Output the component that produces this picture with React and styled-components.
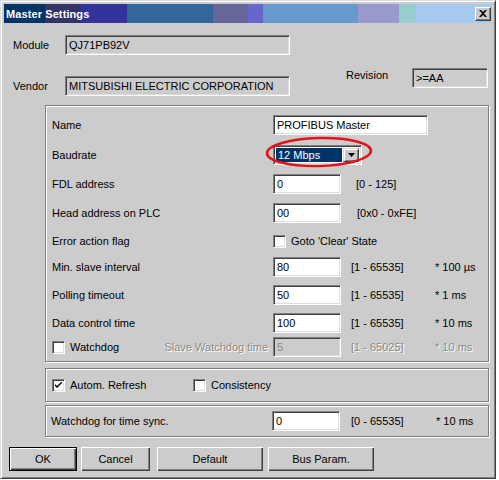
import React from 'react';
import styled, { createGlobalStyle } from 'styled-components';

const GlobalStyle = createGlobalStyle`
  * {
    margin: 0;
    padding: 0;
    box-sizing: border-box;
  }
  body {
    background: #ffffff;
    font-family: 'Liberation Sans', Arial, sans-serif;
    font-size: 11px;
    color: #000;
  }
`;

const face = '#cccccc';

const Window = styled.div`
  width: 496px;
  height: 479px;
  background: ${face};
  border-top: 1px solid #dcdcdc;
  border-left: 1px solid #dcdcdc;
  border-right: 1px solid #404040;
  border-bottom: 1px solid #404040;
  box-shadow: inset 1px 1px #ffffff, inset -1px -1px #808080;
  padding: 3px;
  display: flex;
  flex-direction: column;
`;

const TitleBar = styled.div`
  height: 19px;
  display: flex;
  align-items: center;
  justify-content: space-between;
  padding: 0 1px 0 2px;
  background: linear-gradient(
    to right,
    #003366 0 41px,
    #333366 41px 76px,
    #333399 76px 123px,
    #336699 123px 209px,
    #666699 209px 244px,
    #6666cc 244px 259px,
    #6699cc 259px 354px,
    #9999cc 354px 395px,
    #99cccc 395px 412px,
    #a6caf0 412px
  );
`;

const Title = styled.span`
  color: #fff;
  font-weight: bold;
  font-size: 11px;
  letter-spacing: 0.1px;
`;

const CloseButton = styled.div`
  width: 16px;
  height: 14px;
  background: ${face};
  border-top: 1px solid #fff;
  border-left: 1px solid #fff;
  border-right: 1px solid #404040;
  border-bottom: 1px solid #404040;
  box-shadow: inset -1px -1px #808080;
  display: flex;
  align-items: center;
  justify-content: center;
`;

const Body = styled.div`
  flex: 1;
  display: flex;
  flex-direction: column;
  padding: 12px 0 0 5px;
`;

const TopRow = styled.div`
  display: flex;
  align-items: flex-start;
  margin-top: ${(p) => p.$mt || 0}px;
`;

const TopLabel = styled.div`
  width: ${(p) => p.$w}px;
  height: ${(p) => p.$h || 20}px;
  line-height: ${(p) => p.$h || 20}px;
  margin-top: ${(p) => p.$mt || 0}px;
  margin-left: ${(p) => p.$ml || 0}px;
  white-space: nowrap;
`;

const Sunken = styled.div`
  width: ${(p) => p.$w}px;
  height: 20px;
  margin-top: ${(p) => p.$mt || 0}px;
  background: ${(p) => (p.$readonly ? face : '#fff')};
  color: ${(p) => (p.$disabled ? '#8a8a8a' : '#000')};
  border-top: 1px solid #808080;
  border-left: 1px solid #808080;
  border-right: 1px solid #fff;
  border-bottom: 1px solid #fff;
  box-shadow: inset 1px 1px #404040, inset -1px -1px #dcdcdc;
  padding: 0 3px;
  line-height: 18px;
  white-space: nowrap;
  overflow: hidden;
`;

const Group = styled.div`
  width: 444px;
  height: ${(p) => p.$h}px;
  margin-left: 36px;
  margin-top: ${(p) => p.$mt}px;
  border: 1px solid #808080;
  box-shadow: inset 1px 1px #fff, 1px 1px #fff;
  padding: ${(p) => p.$pad || '0 0 0 6px'};
  display: flex;
  flex-direction: column;
`;

const Row = styled.div`
  height: ${(p) => p.$h}px;
  display: grid;
  grid-template-columns: 221px 78px 84px auto;
  align-items: center;
`;

const Label = styled.div`
  white-space: nowrap;
  color: ${(p) => (p.$disabled ? '#8a8a8a' : '#000')};
  text-shadow: ${(p) => (p.$disabled ? '1px 1px #fff' : 'none')};
`;

const SplitLabel = styled.div`
  display: flex;
  align-items: center;
  justify-content: space-between;
  padding-right: 5px;
`;

const Range = styled.div`
  white-space: nowrap;
  padding-left: ${(p) => p.$indent || 0}px;
  color: ${(p) => (p.$disabled ? '#8a8a8a' : '#000')};
  text-shadow: ${(p) => (p.$disabled ? '1px 1px #fff' : 'none')};
`;

const ControlWrap = styled.div`
  position: relative;
  grid-column: ${(p) => p.$span || 'auto'};
`;

const Select = styled.div`
  width: 89px;
  height: 20px;
  background: #fff;
  border-top: 1px solid #808080;
  border-left: 1px solid #808080;
  border-right: 1px solid #fff;
  border-bottom: 1px solid #fff;
  box-shadow: inset 1px 1px #404040, inset -1px -1px #dcdcdc;
  padding: 2px;
  display: flex;
  gap: 1px;
`;

const SelectValue = styled.div`
  flex: 1;
  background: #003366;
  color: #fff;
  line-height: 14px;
  padding-left: 2px;
`;

const DropButton = styled.div`
  width: 16px;
  height: 14px;
  background: ${face};
  border-top: 1px solid #dcdcdc;
  border-left: 1px solid #dcdcdc;
  border-right: 1px solid #404040;
  border-bottom: 1px solid #404040;
  box-shadow: inset 1px 1px #fff, inset -1px -1px #808080;
  display: flex;
  align-items: center;
  justify-content: center;
`;

const Annotation = styled.svg`
  position: absolute;
  left: -8px;
  top: -9px;
  pointer-events: none;
`;

const CheckRow = styled.div`
  display: flex;
  align-items: center;
  gap: 5px;
  white-space: nowrap;
  width: ${(p) => (p.$w ? `${p.$w}px` : 'auto')};
`;

const Box = styled.div`
  width: 13px;
  height: 13px;
  flex: none;
  background: #fff;
  border-top: 1px solid #808080;
  border-left: 1px solid #808080;
  border-right: 1px solid #fff;
  border-bottom: 1px solid #fff;
  box-shadow: inset 1px 1px #404040, inset -1px -1px #dcdcdc;
  display: flex;
  align-items: center;
  justify-content: center;
`;

const InlineRow = styled.div`
  flex: 1;
  display: flex;
  align-items: center;
`;

const Buttons = styled.div`
  display: flex;
  margin-top: 10px;
`;

const Button = styled.div`
  width: ${(p) => p.$w}px;
  height: 24px;
  margin-right: ${(p) => p.$gap || 0}px;
  background: ${face};
  border: ${(p) => (p.$default ? '1px solid #000' : 'none')};
  display: flex;
  align-items: center;
  justify-content: center;
  box-shadow: inset 1px 1px #fff, inset -1px -1px #404040, inset -2px -2px #808080;
`;

const Check = ({ checked }) => (
  <Box>
    {checked && (
      <svg width="7" height="7" viewBox="0 0 7 7">
        <path d="M0 2 L0 4 L2 6 L7 1 L7 -1 L2 4 Z" fill="#000" />
      </svg>
    )}
  </Box>
);

const params = [
  { label: 'Min. slave interval', value: '80', range: '[1 - 65535]', unit: '* 100 µs', h: 26 },
  { label: 'Polling timeout', value: '50', range: '[1 - 65535]', unit: '* 1 ms', h: 30 },
  { label: 'Data control time', value: '100', range: '[1 - 65535]', unit: '* 10 ms', h: 26 },
];

export default function App() {
  return (
    <>
      <GlobalStyle />
      <Window>
        <TitleBar>
          <Title>Master Settings</Title>
          <CloseButton>
            <svg width="8" height="7" viewBox="0 0 8 7">
              <path d="M0 0h2l2 2 2-2h2L5 3.5 8 7H6L4 5 2 7H0l3-3.5z" fill="#000" />
            </svg>
          </CloseButton>
        </TitleBar>
        <Body>
          <TopRow>
            <TopLabel $w={52} $ml={4}>Module</TopLabel>
            <Sunken $w={225} $readonly>QJ71PB92V</Sunken>
          </TopRow>
          <TopRow $mt={13}>
            <TopLabel $w={52} $ml={4} $mt={8}>Vendor</TopLabel>
            <Sunken $w={225} $mt={8} $readonly>MITSUBISHI ELECTRIC CORPORATION</Sunken>
            <TopLabel $w={66} $ml={56} $h={14}>Revision</TopLabel>
            <Sunken $w={76} $readonly>&gt;=AA</Sunken>
          </TopRow>

          <Group $h={257} $mt={9} $pad="4px 0 3px 6px">
            <Row $h={30}>
              <Label>Name</Label>
              <ControlWrap $span="2 / 5">
                <Sunken $w={155}>PROFIBUS Master</Sunken>
              </ControlWrap>
            </Row>
            <Row $h={30}>
              <Label>Baudrate</Label>
              <ControlWrap $span="2 / 4">
                <Select>
                  <SelectValue>12 Mbps</SelectValue>
                  <DropButton>
                    <svg width="7" height="4" viewBox="0 0 7 4">
                      <path d="M0 0h7L3.5 4z" fill="#000" />
                    </svg>
                  </DropButton>
                </Select>
                <Annotation width="108" height="32" viewBox="0 0 108 32">
                  <ellipse cx="54" cy="16" rx="52" ry="14" fill="none" stroke="#e3131b" strokeWidth="2.6" transform="rotate(-1.5 54 16)" />
                </Annotation>
              </ControlWrap>
            </Row>
            <Row $h={28}>
              <Label>FDL address</Label>
              <Sunken $w={68}>0</Sunken>
              <Range $indent={5}>[0 - 125]</Range>
            </Row>
            <Row $h={30}>
              <Label>Head address on PLC</Label>
              <Sunken $w={68}>00</Sunken>
              <Range $indent={6}>[0x0 - 0xFE]</Range>
            </Row>
            <Row $h={26}>
              <Label>Error action flag</Label>
              <ControlWrap $span="2 / 5">
                <CheckRow>
                  <Check />
                  Goto 'Clear' State
                </CheckRow>
              </ControlWrap>
            </Row>
            {params.map((p) => (
              <Row key={p.label} $h={p.h}>
                <Label>{p.label}</Label>
                <Sunken $w={68}>{p.value}</Sunken>
                <Range>{p.range}</Range>
                <Range>{p.unit}</Range>
              </Row>
            ))}
            <Row $h={22}>
              <SplitLabel>
                <CheckRow>
                  <Check />
                  Watchdog
                </CheckRow>
                <Label $disabled>Slave Watchdog time</Label>
              </SplitLabel>
              <Sunken $w={68} $readonly $disabled>5</Sunken>
              <Range $disabled>[1 - 65025]</Range>
              <Range $disabled>* 10 ms</Range>
            </Row>
          </Group>

          <Group $h={34} $mt={6}>
            <InlineRow>
              <CheckRow $w={141}>
                <Check checked />
                Autom. Refresh
              </CheckRow>
              <CheckRow>
                <Check />
                Consistency
              </CheckRow>
            </InlineRow>
          </Group>

          <Group $h={32} $mt={3} $pad="0 0 0 5px">
            <Row $h={30}>
              <Label>Watchdog for time sync.</Label>
              <Sunken $w={68}>0</Sunken>
              <Range $indent={1}>[0 - 65535]</Range>
              <Range $indent={2}>* 10 ms</Range>
            </Row>
          </Group>

          <Buttons>
            <Button $w={68} $gap={4} $default>OK</Button>
            <Button $w={69} $gap={7}>Cancel</Button>
            <Button $w={106} $gap={5}>Default</Button>
            <Button $w={106}>Bus Param.</Button>
          </Buttons>
        </Body>
      </Window>
    </>
  );
}
